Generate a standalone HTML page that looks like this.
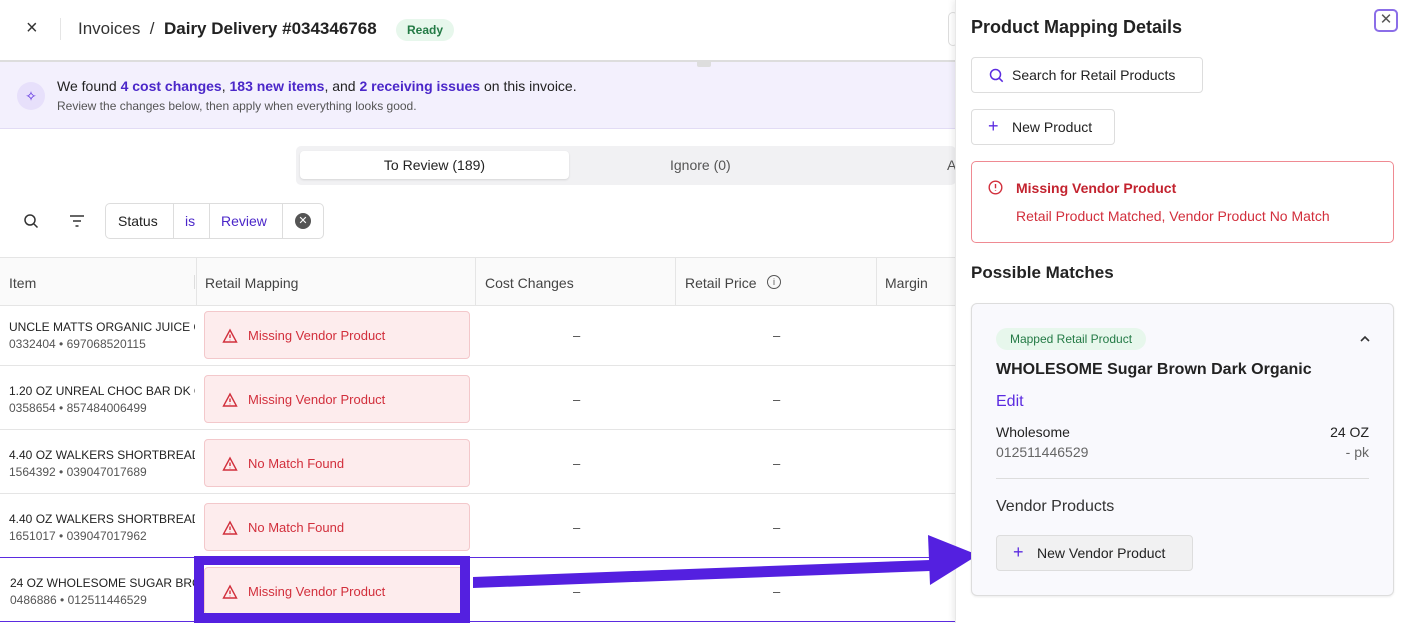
<!DOCTYPE html>
<html><head><meta charset="utf-8"><style>
*{box-sizing:border-box;margin:0;padding:0}
body{width:1408px;height:623px;overflow:hidden;background:#fff;font-family:"Liberation Sans",sans-serif;color:#222;position:relative}
.abs{position:absolute}
.row{position:absolute;left:0;width:955px;height:64px;border-bottom:1px solid #e5e5e5}
.it{position:absolute;left:9px;top:18px;font-size:12px;color:#222;width:186px;overflow:hidden;white-space:nowrap}
.it small{display:block;color:#555;font-size:12px;margin-top:3px}
.badge{position:absolute;left:204px;top:9px;width:266px;height:48px;background:#fdeced;border:1px solid #f3c8cb;border-radius:4px;color:#d22f3c;font-size:13px;padding:16px 0 0 43px}
.badge svg{position:absolute;left:17px;top:16px}
.dash{position:absolute;top:26px;font-size:13px;color:#444}
.btn{position:absolute;border:1px solid #ddd;border-radius:4px;background:#fff;font-size:14px;color:#222}
</style></head><body>
<div class="abs" style="left:26px;top:17px;font-size:20px;color:#333">×</div>
<div class="abs" style="left:60px;top:18px;width:1px;height:22px;background:#e5e5e5"></div>
<div class="abs" style="left:78px;top:19px;font-size:17px;color:#333">Invoices &nbsp;/&nbsp; <b style="color:#222">Dairy Delivery #034346768</b></div>
<div class="abs" style="left:396px;top:19px;width:58px;height:22px;border-radius:11px;background:#e7f7ec;color:#237a45;font-size:12px;font-weight:bold;text-align:center;line-height:22px">Ready</div>
<div class="abs" style="left:948px;top:12px;width:10px;height:34px;border:1px solid #ddd;border-radius:5px"></div>
<div class="abs" style="left:0;top:60px;width:955px;height:2px;background:#ddd"></div>
<div class="abs" style="left:0;top:62px;width:955px;height:67px;background:#f3f0fd;border-bottom:1px solid #e2dcf5"></div>
<div class="abs" style="left:697px;top:60px;width:14px;height:7px;background:#ddd;border-radius:2px"></div>
<div class="abs" style="left:17px;top:82px;width:28px;height:28px;border-radius:14px;background:#e7e0fb;color:#5b2be0;font-size:14px;text-align:center;line-height:28px">✧</div>
<div class="abs" style="left:57px;top:78px;font-size:14px;color:#222">We found <b style="color:#4b27c9">4 cost changes</b>, <b style="color:#4b27c9">183 new items</b>, and <b style="color:#4b27c9">2 receiving issues</b> on this invoice.</div>
<div class="abs" style="left:57px;top:99px;font-size:12px;color:#555">Review the changes below, then apply when everything looks good.</div>
<div class="abs" style="left:296px;top:146px;width:660px;height:39px;background:#f1f1f3;border-radius:5px"></div>
<div class="abs" style="left:300px;top:151px;width:269px;height:28px;background:#fff;border-radius:4px;box-shadow:0 1px 2px rgba(0,0,0,.12);font-size:14px;text-align:center;line-height:28px;color:#222">To Review (189)</div>
<div class="abs" style="left:670px;top:157px;font-size:14px;color:#555">Ignore (0)</div>
<div class="abs" style="left:947px;top:157px;font-size:14px;color:#555">A</div>
<svg class="abs" style="left:23px;top:213px" width="16" height="16" viewBox="0 0 16 16" fill="none" stroke="#333" stroke-width="1.5"><circle cx="7" cy="7" r="5"/><path d="M11 11l3.5 3.5"/></svg>
<svg class="abs" style="left:69px;top:214px" width="16" height="14" viewBox="0 0 16 14" stroke="#333" stroke-width="1.5"><path d="M1 2h14M4 7h8M6.5 12h3"/></svg>
<div class="abs" style="left:105px;top:203px;width:219px;height:36px;border:1px solid #ddd;border-radius:5px"></div>
<div class="abs" style="left:118px;top:213px;font-size:14px;color:#222">Status</div>
<div class="abs" style="left:173px;top:204px;width:1px;height:34px;background:#ddd"></div>
<div class="abs" style="left:185px;top:213px;font-size:14px;color:#4b27c9">is</div>
<div class="abs" style="left:209px;top:204px;width:1px;height:34px;background:#ddd"></div>
<div class="abs" style="left:221px;top:213px;font-size:14px;color:#4b27c9">Review</div>
<div class="abs" style="left:282px;top:204px;width:1px;height:34px;background:#ddd"></div>
<div class="abs" style="left:295px;top:213px;width:16px;height:16px;border-radius:8px;background:#555;color:#fff;font-size:11px;text-align:center;line-height:16px">✕</div>
<div class="abs" style="left:0;top:257px;width:955px;height:49px;background:#fafafa;border-top:1px solid #e5e5e5;border-bottom:1px solid #e5e5e5"></div>
<div class="abs" style="left:9px;top:275px;font-size:14px;color:#444">Item</div>
<div class="abs" style="left:194px;top:275px;width:1px;height:14px;background:#ddd"></div>
<div class="abs" style="left:196px;top:258px;width:1px;height:48px;background:#e5e5e5"></div>
<div class="abs" style="left:205px;top:275px;font-size:14px;color:#444">Retail Mapping</div>
<div class="abs" style="left:475px;top:258px;width:1px;height:48px;background:#e5e5e5"></div>
<div class="abs" style="left:485px;top:275px;font-size:14px;color:#444">Cost Changes</div>
<div class="abs" style="left:675px;top:258px;width:1px;height:48px;background:#e5e5e5"></div>
<div class="abs" style="left:685px;top:275px;font-size:14px;color:#444">Retail Price</div>
<div class="abs" style="left:767px;top:275px;width:14px;height:14px;border:1.3px solid #555;border-radius:7px;font-size:9px;text-align:center;line-height:12px;color:#555">i</div>
<div class="abs" style="left:876px;top:258px;width:1px;height:48px;background:#e5e5e5"></div>
<div class="abs" style="left:885px;top:275px;font-size:14px;color:#444">Margin</div>
<div class="row" style="top:302px"><div class="it">UNCLE MATTS ORGANIC JUICE OJ<small>0332404 • 697068520115</small></div><div class="badge"><svg width="16" height="16" viewBox="0 0 16 16" fill="none" stroke="#d22f3c" stroke-width="1.4"><path d="M8 2L14.5 14H1.5Z"/><path d="M8 6.5v3.5M8 11.7v.6"/></svg>Missing Vendor Product</div><div class="dash" style="left:573px">–</div><div class="dash" style="left:773px">–</div></div>
<div class="row" style="top:366px"><div class="it">1.20 OZ UNREAL CHOC BAR DK CH<small>0358654 • 857484006499</small></div><div class="badge"><svg width="16" height="16" viewBox="0 0 16 16" fill="none" stroke="#d22f3c" stroke-width="1.4"><path d="M8 2L14.5 14H1.5Z"/><path d="M8 6.5v3.5M8 11.7v.6"/></svg>Missing Vendor Product</div><div class="dash" style="left:573px">–</div><div class="dash" style="left:773px">–</div></div>
<div class="row" style="top:430px"><div class="it">4.40 OZ WALKERS SHORTBREAD<small>1564392 • 039047017689</small></div><div class="badge"><svg width="16" height="16" viewBox="0 0 16 16" fill="none" stroke="#d22f3c" stroke-width="1.4"><path d="M8 2L14.5 14H1.5Z"/><path d="M8 6.5v3.5M8 11.7v.6"/></svg>No Match Found</div><div class="dash" style="left:573px">–</div><div class="dash" style="left:773px">–</div></div>
<div class="row" style="top:494px;border-bottom:1px solid #5b2be0"><div class="it">4.40 OZ WALKERS SHORTBREAD<small>1651017 • 039047017962</small></div><div class="badge"><svg width="16" height="16" viewBox="0 0 16 16" fill="none" stroke="#d22f3c" stroke-width="1.4"><path d="M8 2L14.5 14H1.5Z"/><path d="M8 6.5v3.5M8 11.7v.6"/></svg>No Match Found</div><div class="dash" style="left:573px">–</div><div class="dash" style="left:773px">–</div></div>
<div class="row" style="top:558px;border-bottom:1px solid #5b2be0"><div class="it" style="left:10px">24 OZ WHOLESOME SUGAR BROWN<small>0486886 • 012511446529</small></div><div class="badge"><svg width="16" height="16" viewBox="0 0 16 16" fill="none" stroke="#d22f3c" stroke-width="1.4"><path d="M8 2L14.5 14H1.5Z"/><path d="M8 6.5v3.5M8 11.7v.6"/></svg>Missing Vendor Product</div><div class="dash" style="left:573px">–</div><div class="dash" style="left:773px">–</div></div>
<div class="abs" style="left:194px;top:556px;width:276px;height:67px;border:10px solid #5420e0;border-top-width:9px;border-bottom-width:10px"></div>
<svg class="abs" style="left:0;top:0" width="1408" height="623"><path d="M473 577 L930 560 L930 571 L473 588Z" fill="#5420e0"/></svg>
<div class="abs" style="left:955px;top:0;width:453px;height:623px;background:#fff;box-shadow:-2px 0 6px rgba(0,0,0,.08);border-left:1px solid #e8e8e8"></div>
<svg class="abs" style="left:0;top:0" width="1408" height="623"><path d="M928 535 L978 555 L930 585Z" fill="#5420e0"/></svg>
<div class="abs" style="left:971px;top:17px;font-size:18px;font-weight:bold;color:#222">Product Mapping Details</div>
<div class="abs" style="left:1374px;top:9px;width:24px;height:23px;border:2px solid #8b6ee8;border-radius:5px;text-align:center;line-height:18px;font-size:15px;color:#555">✕</div>
<div class="btn" style="left:971px;top:57px;width:232px;height:36px"><svg class="abs" style="left:17px;top:10px" width="15" height="15" viewBox="0 0 15 15" fill="none" stroke="#5b2be0" stroke-width="1.5"><circle cx="6.5" cy="6.5" r="5"/><path d="M10.2 10.2l3.5 3.5"/></svg><span class="abs" style="left:40px;top:9px">Search for Retail Products</span></div>
<div class="btn" style="left:971px;top:109px;width:144px;height:36px"><span class="abs" style="left:16px;top:6px;color:#5b2be0;font-size:18px">+</span><span class="abs" style="left:40px;top:9px">New Product</span></div>
<div class="abs" style="left:971px;top:161px;width:423px;height:82px;border:1px solid #ef8a92;border-radius:5px"></div>
<svg class="abs" style="left:988px;top:180px" width="15" height="15" viewBox="0 0 15 15" fill="none" stroke="#d22f3c" stroke-width="1.4"><circle cx="7.5" cy="7.5" r="6.3"/><path d="M7.5 4v4.2M7.5 10.3v.6"/></svg>
<div class="abs" style="left:1016px;top:180px;font-size:14px;font-weight:bold;color:#c3232f">Missing Vendor Product</div>
<div class="abs" style="left:1016px;top:208px;font-size:14px;color:#d22f3c">Retail Product Matched, Vendor Product No Match</div>
<div class="abs" style="left:971px;top:263px;font-size:17px;font-weight:bold;color:#222">Possible Matches</div>
<div class="abs" style="left:971px;top:303px;width:423px;height:293px;background:#f9f9fd;border:1px solid #ddd;border-radius:6px;box-shadow:0 1px 2px rgba(0,0,0,.08)"></div>
<div class="abs" style="left:996px;top:328px;width:150px;height:22px;border-radius:11px;background:#e7f7ec;color:#237a45;font-size:12px;line-height:22px;text-align:center">Mapped Retail Product</div>
<svg class="abs" style="left:1359px;top:335px" width="12" height="8" viewBox="0 0 12 8" fill="none" stroke="#333" stroke-width="1.6"><path d="M2 6l4-4 4 4"/></svg>
<div class="abs" style="left:996px;top:361px;font-size:16px;font-weight:bold;color:#222">WHOLESOME Sugar Brown Dark Organic</div>
<div class="abs" style="left:996px;top:393px;font-size:16px;color:#5b2be0">Edit</div>
<div class="abs" style="left:996px;top:424px;font-size:14px;color:#222">Wholesome</div>
<div class="abs" style="left:996px;top:444px;font-size:14px;color:#666">012511446529</div>
<div class="abs" style="left:1300px;top:424px;width:69px;text-align:right;font-size:14px;color:#222">24 OZ</div>
<div class="abs" style="left:1300px;top:444px;width:69px;text-align:right;font-size:14px;color:#666">- pk</div>
<div class="abs" style="left:996px;top:478px;width:373px;height:1px;background:#ddd"></div>
<div class="abs" style="left:996px;top:498px;font-size:16px;color:#333">Vendor Products</div>
<div class="abs" style="left:996px;top:535px;width:197px;height:36px;border:1px solid #ddd;border-radius:4px;background:#f1f1f2"><span class="abs" style="left:16px;top:6px;color:#5b2be0;font-size:18px">+</span><span class="abs" style="left:40px;top:9px;font-size:14px">New Vendor Product</span></div>
</body></html>
